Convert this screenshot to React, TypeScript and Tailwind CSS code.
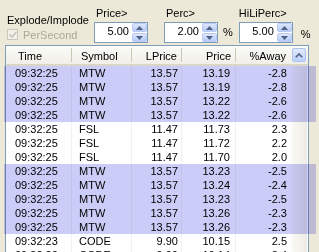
import React from 'react';

type Fila = { t: string; s: string; lp: string; p: string; a: string; hl?: boolean };

const filas: Fila[] = [
  { t: '09:32:25', s: 'MTW', lp: '13.57', p: '13.19', a: '-2.8', hl: true },
  { t: '09:32:25', s: 'MTW', lp: '13.57', p: '13.19', a: '-2.8', hl: true },
  { t: '09:32:25', s: 'MTW', lp: '13.57', p: '13.22', a: '-2.6', hl: true },
  { t: '09:32:25', s: 'MTW', lp: '13.57', p: '13.22', a: '-2.6', hl: true },
  { t: '09:32:25', s: 'FSL', lp: '11.47', p: '11.73', a: '2.3' },
  { t: '09:32:25', s: 'FSL', lp: '11.47', p: '11.72', a: '2.2' },
  { t: '09:32:25', s: 'FSL', lp: '11.47', p: '11.70', a: '2.0' },
  { t: '09:32:25', s: 'MTW', lp: '13.57', p: '13.23', a: '-2.5', hl: true },
  { t: '09:32:25', s: 'MTW', lp: '13.57', p: '13.24', a: '-2.4', hl: true },
  { t: '09:32:25', s: 'MTW', lp: '13.57', p: '13.23', a: '-2.5', hl: true },
  { t: '09:32:25', s: 'MTW', lp: '13.57', p: '13.26', a: '-2.3', hl: true },
  { t: '09:32:25', s: 'MTW', lp: '13.57', p: '13.26', a: '-2.3', hl: true },
  { t: '09:32:23', s: 'CODE', lp: '9.90', p: '10.15', a: '2.5' },
  { t: '09:32:23', s: 'CODE', lp: '9.90', p: '10.14', a: '2.4' },
];

function Triangulo({ abajo }: { abajo?: boolean }) {
  return (
    <svg width="7" height="4" viewBox="0 0 7 4">
      <path d={abajo ? 'M0 0 H7 L3.5 4 Z' : 'M0 4 H7 L3.5 0 Z'} fill="#4D6185" />
    </svg>
  );
}

function Campo({ valor }: { valor: string }) {
  return (
    <div className="flex h-[21px] w-[54px] border border-[#7F9DB9] bg-white">
      <div className="flex-1 pr-[3px] text-right leading-[17px]">{valor}</div>
      <div className="flex w-[15px] flex-col gap-px">
        <div className="flex flex-1 items-center justify-center rounded-[2px] border border-[#B9CBF3] bg-gradient-to-b from-[#DDE7FD] to-[#B7CBF8]">
          <Triangulo />
        </div>
        <div className="flex flex-1 items-center justify-center rounded-[2px] border border-[#B9CBF3] bg-gradient-to-b from-[#DDE7FD] to-[#B7CBF8]">
          <Triangulo abajo />
        </div>
      </div>
    </div>
  );
}

export default function App() {
  return (
    <div className="h-[252px] w-[319px] overflow-hidden bg-[#ECE9D8] font-['Liberation_Sans',Arial,sans-serif] text-[11px] text-black">
      {/* controles */}
      <div className="flex h-[45px]">
        <div className="ml-[7px] w-[87px] pt-[13px]">
          <div className="leading-[14px]">Explode/Implode</div>
          <div className="mt-px flex items-start gap-[5px]">
            <div className="mt-px flex h-[11px] w-[11px] items-center justify-center border border-[#CAC8BB] bg-[#F2F1EA]">
              <svg width="8" height="7" viewBox="0 0 8 7">
                <path d="M0.5 3.5 L3 6 L7.5 0.8" stroke="#C6C4B6" strokeWidth="1.6" fill="none" />
              </svg>
            </div>
            <span className="leading-[14px] text-[#ACA899]">PerSecond</span>
          </div>
        </div>
        <div className="pt-[6px]">
          <div className="ml-[2px] mb-[2px] leading-[14px]">Price&gt;</div>
          <Campo valor="5.00" />
        </div>
        <div className="ml-[16px] pt-[6px]">
          <div className="ml-[2px] mb-[2px] leading-[14px]">Perc&gt;</div>
          <div className="flex items-center">
            <Campo valor="2.00" />
            <span className="ml-[5px]">%</span>
          </div>
        </div>
        <div className="ml-[6px] pt-[6px]">
          <div className="mb-[2px] leading-[14px]">HiLiPerc&gt;</div>
          <div className="flex items-center">
            <Campo valor="5.00" />
            <span className="ml-[8px] mt-[3px]">%</span>
          </div>
        </div>
      </div>

      {/* rejilla */}
      <div className="ml-[5px] h-[220px] w-[304px] border border-[#7F9DB9] bg-white">
        <div className="flex h-[20px] border-b-2 border-[#DAD6C6] bg-gradient-to-b from-[#FBFBF8] to-[#F0EFE7] leading-[15px]">
          <div className="w-[65px] pl-[12px] pt-[3px]">Time</div>
          <div className="mt-[2px] h-[14px] w-px bg-[#C9C6B6]" />
          <div className="w-[59px] pl-[9px] pt-[3px]">Symbol</div>
          <div className="mt-[2px] h-[14px] w-px bg-[#C9C6B6]" />
          <div className="w-[49px] pr-[4px] pt-[3px] text-right">LPrice</div>
          <div className="mt-[2px] h-[14px] w-px bg-[#C9C6B6]" />
          <div className="w-[53px] pr-[4px] pt-[3px] text-right">Price</div>
          <div className="mt-[2px] h-[14px] w-px bg-[#C9C6B6]" />
          <div className="w-[55px] pr-[5px] pt-[3px] text-right">%Away</div>
          <div className="w-[16px] pl-px pt-[2px]">
            <div className="flex h-[14px] w-[14px] items-center justify-center rounded-[2px] border border-[#AFC3F0] bg-gradient-to-b from-[#E2EAFD] to-[#BCCFF9]">
              <svg width="8" height="5" viewBox="0 0 8 5">
                <path d="M0.8 4.2 L4 1 L7.2 4.2" stroke="#4D6185" strokeWidth="1.6" fill="none" />
              </svg>
            </div>
          </div>
        </div>
        {filas.map((f, i) => (
          <div key={i} className="relative flex h-[14px] leading-[14px]">
            <div className="w-[66px] border-r border-[#F1F1F1] pl-[9px]">{f.t}</div>
            <div className="w-[60px] border-r border-[#F1F1F1] pl-[7px]">{f.s}</div>
            <div className="w-[50px] border-r border-[#F1F1F1] pr-[3px] text-right">{f.lp}</div>
            <div className="w-[54px] border-r border-[#F1F1F1] pr-[5px] text-right">{f.p}</div>
            <div className="w-[55px] pr-[4px] text-right">{f.a}</div>
            <div className="w-[16px] bg-gradient-to-r from-[#FAFAF7] to-[#EDEBE3]" />
            {f.hl && (
              <div className="pointer-events-none absolute inset-y-0 -left-[2px] -right-[8px] bg-[#CCCCF8] mix-blend-multiply" />
            )}
          </div>
        ))}
      </div>
    </div>
  );
}
